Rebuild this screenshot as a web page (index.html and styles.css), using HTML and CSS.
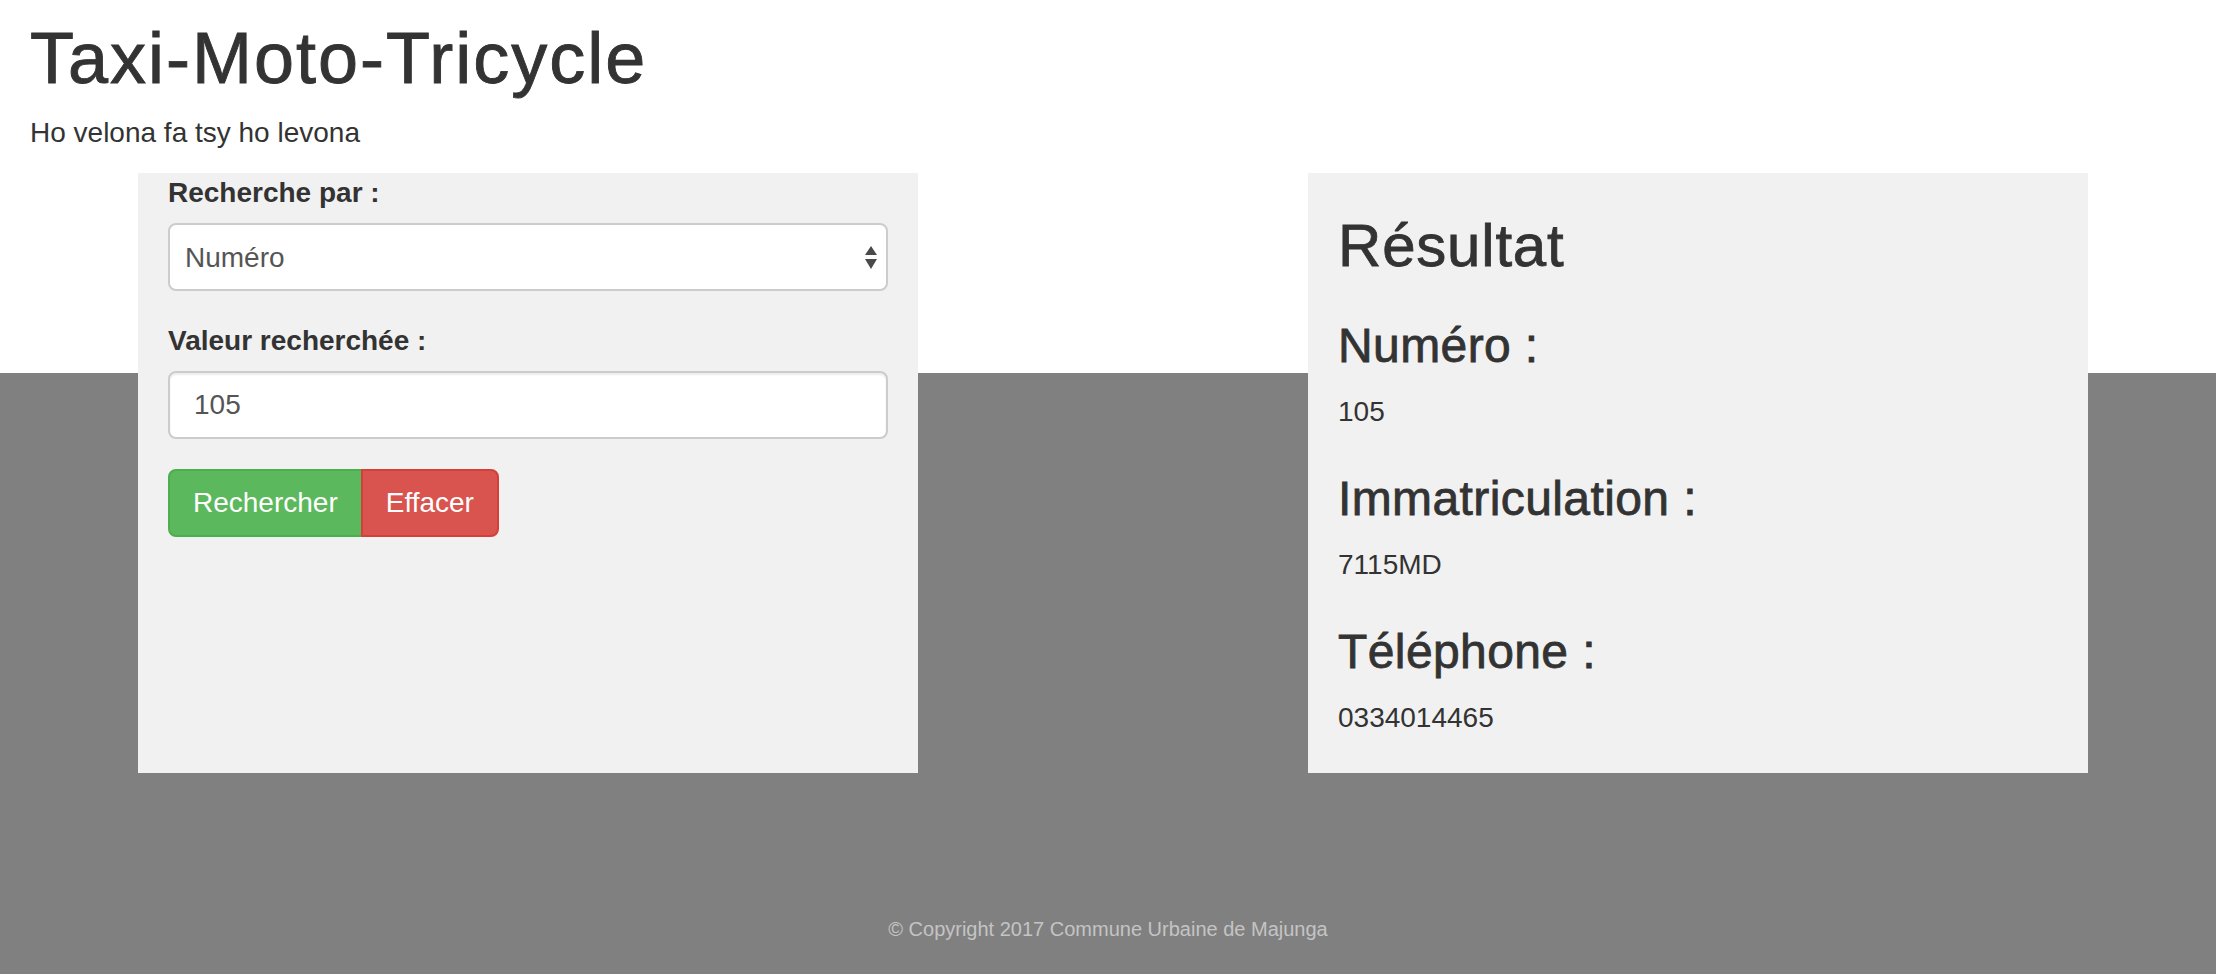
FILE: index.html
```html
<!DOCTYPE html>
<html lang="fr">
<head>
<meta charset="utf-8">
<title>Taxi-Moto-Tricycle</title>
<link rel="stylesheet" href="styles.css">
</head>
<body>
<header class="page-header">
  <h1 class="title">Taxi-Moto-Tricycle</h1>
  <p class="tagline">Ho velona fa tsy ho levona</p>
</header>
<main class="panels">
  <section class="panel search">
    <div class="form-group">
      <label class="label">Recherche par :</label>
      <div class="select-wrap">
        <select class="control select">
          <option>Numéro</option>
        </select>
        <svg class="select-arrows" width="12" height="24" viewBox="0 0 12 24"><path d="M6 0 L12 9 L0 9 Z" fill="#4a4a4a"/><path d="M0 13 L12 13 L6 23 Z" fill="#4a4a4a"/></svg>
      </div>
    </div>
    <div class="form-group">
      <label class="label">Valeur recherchée :</label>
      <input class="control" type="text" value="105">
    </div>
    <div class="btn-group">
      <button class="btn btn-success" type="button">Rechercher</button><button class="btn btn-danger" type="button">Effacer</button>
    </div>
  </section>
  <section class="panel result">
    <h2 class="result-title">Résultat</h2>
    <h3 class="field-title">Numéro :</h3>
    <p class="field-value">105</p>
    <h3 class="field-title">Immatriculation :</h3>
    <p class="field-value">7115MD</p>
    <h3 class="field-title">Téléphone :</h3>
    <p class="field-value">0334014465</p>
  </section>
</main>
<footer class="footer">© Copyright 2017 Commune Urbaine de Majunga</footer>
</body>
</html>
```

FILE: styles.css
```css
html {
  background: #808080;
}
body {
  margin: 0;
  min-height: 974px;
  font-family: "Liberation Sans", Arial, Helvetica, sans-serif;
  font-size: 28px;
  line-height: 40px;
  color: #333;
  background: linear-gradient(to bottom, #fff 0, #fff 373px, #808080 373px, #808080 100%);
}
.page-header {
  padding: 0 30px;
  display: flow-root;
}
.title {
  margin: 19px 0 15px;
  font-size: 72px;
  line-height: 79px;
  font-weight: 500;
  letter-spacing: 2px;
  color: #333;
  -webkit-text-stroke: 0.9px #333;
}
.tagline {
  margin: 0 0 20px;
}
.panels {
  display: flex;
  justify-content: space-between;
  align-items: stretch;
  padding: 0 128px 0 138px;
}
.panel {
  width: 780px;
  box-sizing: border-box;
  background: #f1f1f1;
  padding: 0 30px;
  display: flow-root;
}
.result {
  padding-bottom: 15px;
}
.form-group {
  margin-bottom: 30px;
}
.label {
  display: block;
  font-weight: bold;
  margin-bottom: 10px;
}
.control {
  display: block;
  width: 100%;
  height: 68px;
  box-sizing: border-box;
  padding: 12px 24px;
  font-family: inherit;
  font-size: 28px;
  color: #555;
  background: #fff;
  border: 2px solid #ccc;
  border-radius: 8px;
  box-shadow: inset 0 2px 2px rgba(0, 0, 0, 0.075);
  outline: none;
}
.select-wrap {
  position: relative;
}
.select {
  appearance: none;
  -webkit-appearance: none;
  padding-left: 15px;
  box-shadow: none;
}
.select-arrows {
  position: absolute;
  right: 11px;
  top: 23px;
  pointer-events: none;
}
.btn-group {
  display: flex;
}
.btn {
  height: 68px;
  padding: 0 23px;
  font-family: inherit;
  font-size: 28px;
  line-height: 40px;
  color: #fff;
  border: 2px solid;
  cursor: pointer;
}
.btn-success {
  background: #5cb85c;
  border-color: #4cae4c;
  border-radius: 8px 0 0 8px;
}
.btn-danger {
  background: #d9534f;
  border-color: #d43f3a;
  border-radius: 0 8px 8px 0;
  margin-left: -2px;
}
.result-title {
  margin: 40px 0 20px;
  font-size: 60px;
  line-height: 66px;
  font-weight: 500;
  letter-spacing: 0.8px;
  -webkit-text-stroke: 0.8px #333;
}
.field-title {
  margin: 40px 0 20px;
  font-size: 48px;
  line-height: 53px;
  font-weight: 500;
  letter-spacing: 0.4px;
  -webkit-text-stroke: 0.8px #333;
}
.footer {
  padding-top: 136px;
  text-align: center;
  font-size: 20px;
  line-height: 40px;
  color: #c4c4c4;
}
.field-value {
  margin: 0 0 20px;
}
```
